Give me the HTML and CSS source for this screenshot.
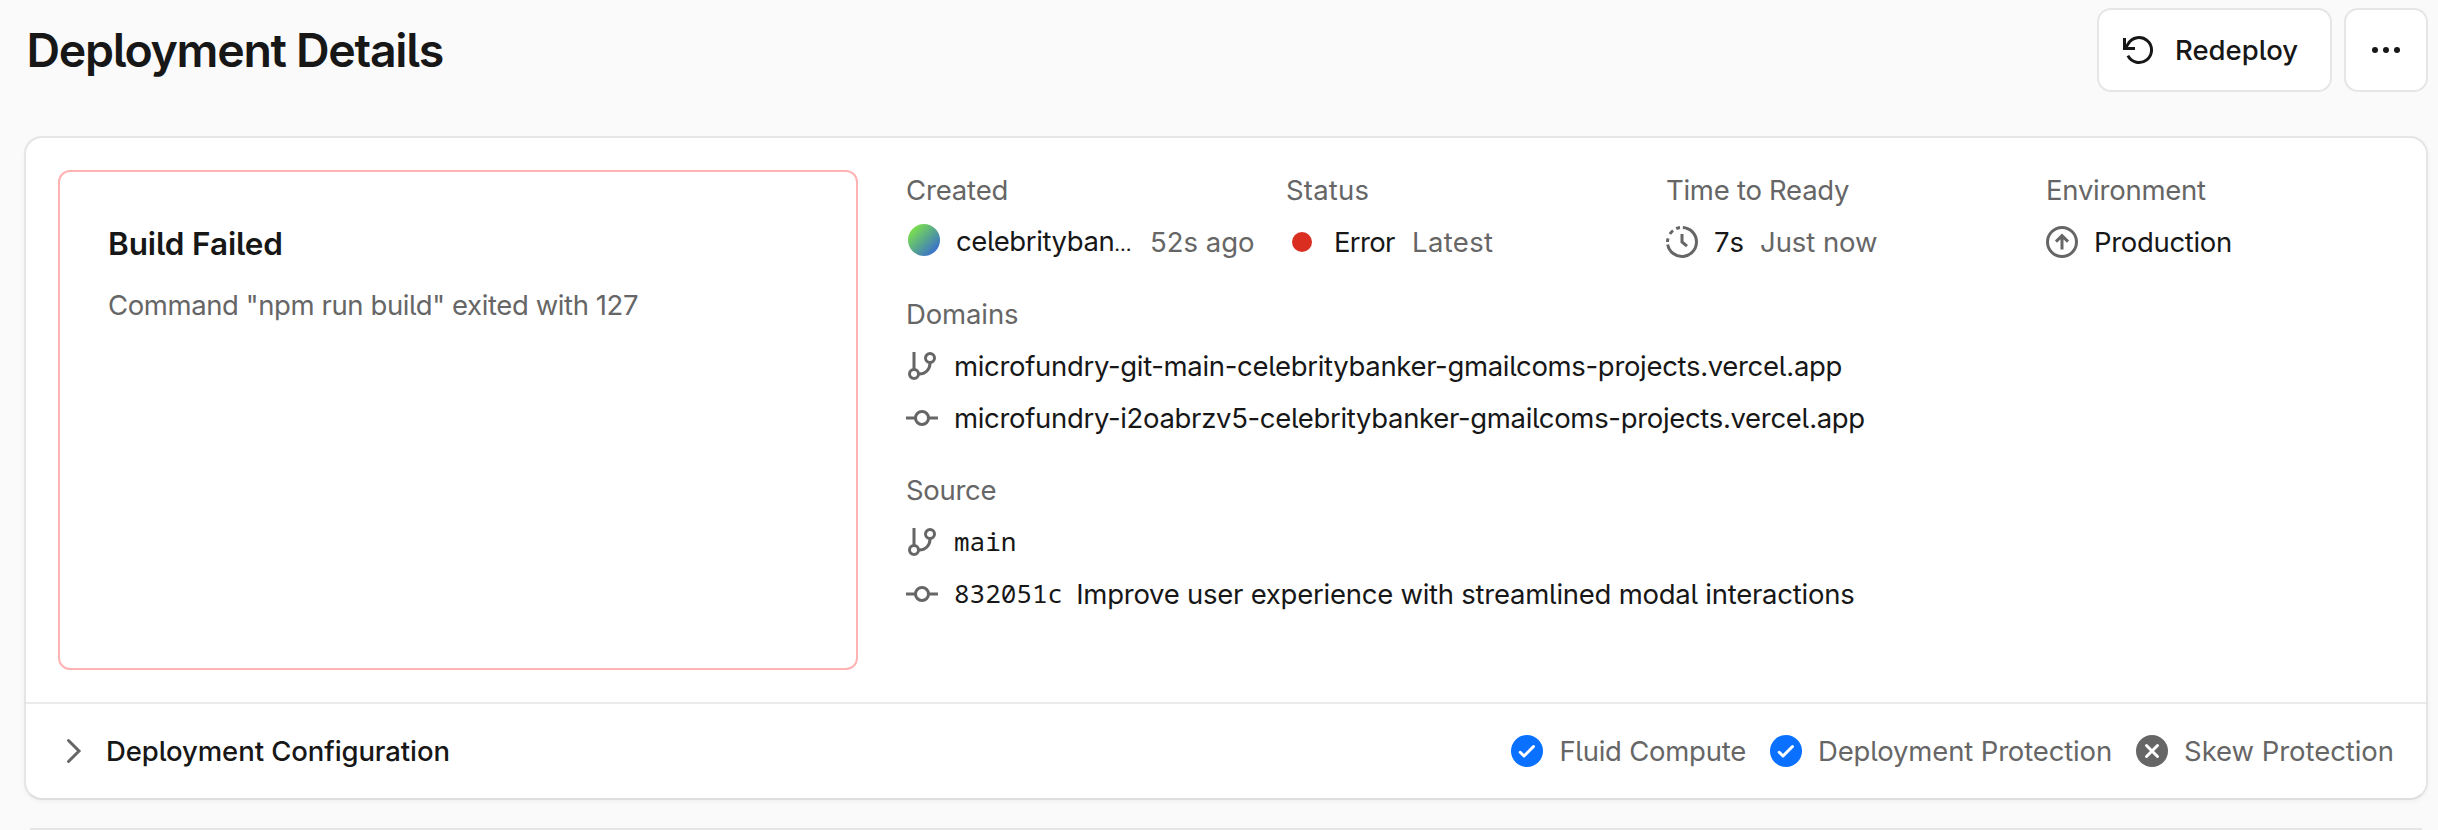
FILE: index.html
```html
<!DOCTYPE html>
<html lang="en">
<head>
<meta charset="utf-8">
<title>Deployment Details</title>
<link rel="stylesheet" href="styles.css">
</head>
<body>
<svg class="sprite" aria-hidden="true">
  <symbol id="branch" viewBox="0 0 32 32"><path d="M8 2v17.5M13 24c6.5 0 11-4.5 11-11"/><circle cx="8" cy="24" r="4.5"/><circle cx="24" cy="8" r="4.5"/></symbol>
  <symbol id="commit" viewBox="0 0 32 32"><path d="M0 16h9.5M22.5 16H32"/><circle cx="16" cy="16" r="6.5"/></symbol>
  <symbol id="check" viewBox="0 0 32 32"><circle class="disc" cx="16" cy="16" r="16"/><path d="M9.2 17.3l3.8 3.7 9.5-9.5"/></symbol>
</svg>
<header class="header">
  <h1 class="title">Deployment Details</h1>
  <div class="actions">
    <button class="button redeploy">
      <svg class="icon" viewBox="0 0 32 32"><path d="M5.9 21.6A12.5 12.5 0 1 0 6.2 9.8L3.5 14"/><path d="M2.5 4v10.5H13"/></svg>
      <span class="t-redeploy">Redeploy</span>
    </button>
    <button class="button more" aria-label="More">
      <svg class="icon dots" viewBox="0 0 32 32"><circle cx="5" cy="16" r="3"/><circle cx="16" cy="16" r="3"/><circle cx="27" cy="16" r="3"/></svg>
    </button>
  </div>
</header>
<main class="card">
  <div class="overview">
    <section class="failure">
      <h2 class="failure-title">Build Failed</h2>
      <p class="failure-text">Command "npm run build" exited with 127</p>
    </section>
    <div class="details">
      <div class="stats">
        <div class="group">
          <div class="label t-created">Created</div>
          <div class="row"><span class="avatar"></span><span class="t-user">celebrityban<span class="ellipsis">…</span></span><span class="muted t-age">52s ago</span></div>
        </div>
        <div class="group">
          <div class="label t-status">Status</div>
          <div class="row"><span class="dot"></span><span class="t-error">Error</span><span class="muted t-latest">Latest</span></div>
        </div>
        <div class="group">
          <div class="label t-time">Time to Ready</div>
          <div class="row">
            <svg class="icon gray" viewBox="0 0 32 32"><path d="M16.8 1.5A14.5 14.5 0 1 1 1.7 18.5M1.5 16Q1.5 14 2 12.3M3.9 8Q5.2 6 7.1 4.6M10.2 2.7Q12 1.9 14 1.6M16 8v8l5 4.2"/></svg>
            <span class="t-seconds">7s</span><span class="muted t-now">Just now</span>
          </div>
        </div>
        <div class="group">
          <div class="label t-env">Environment</div>
          <div class="row">
            <svg class="icon gray" viewBox="0 0 32 32"><circle cx="16" cy="16" r="14.5"/><path d="M16 23.5V10M10 15.6l6-6 6 6"/></svg>
            <span class="t-prod">Production</span>
          </div>
        </div>
      </div>
      <div class="group">
        <div class="label t-domains">Domains</div>
        <div class="row"><svg class="icon gray"><use href="#branch"/></svg><span class="t-domain">microfundry-git-main-celebritybanker-gmailcoms-projects.vercel.app</span></div>
        <div class="row"><svg class="icon gray"><use href="#commit"/></svg><span class="t-domain">microfundry-i2oabrzv5-celebritybanker-gmailcoms-projects.vercel.app</span></div>
      </div>
      <div class="group">
        <div class="label t-source">Source</div>
        <div class="row"><svg class="icon gray"><use href="#branch"/></svg><span class="mono">main</span></div>
        <div class="row"><svg class="icon gray"><use href="#commit"/></svg><span class="mono">832051c</span><span class="t-message">Improve user experience with streamlined modal interactions</span></div>
      </div>
    </div>
  </div>
  <footer class="config">
    <svg class="icon gray chevron" viewBox="0 0 32 32"><path d="M10.5 5.5L21 16 10.5 26.5"/></svg>
    <span class="t-config">Deployment Configuration</span>
    <div class="features">
      <span class="feature"><svg class="icon badge"><use href="#check"/></svg><span class="t-fluid">Fluid Compute</span></span>
      <span class="feature"><svg class="icon badge"><use href="#check"/></svg><span class="t-protect">Deployment Protection</span></span>
      <span class="feature"><svg class="icon badge off" viewBox="0 0 32 32"><circle class="disc" cx="16" cy="16" r="16"/><path d="M10.5 10.5l11 11M21.5 10.5l-11 11"/></svg><span class="t-skew">Skew Protection</span></span>
    </div>
  </footer>
</main>
<div class="next"></div>
</body>
</html>
```
FILE: styles.css
```css
* { box-sizing: border-box; }
body {
  margin: 0;
  padding: 8px 10px 0 24px;
  background: #fafafa;
  color: #171717;
  font: 400 27.5px/40px Inter, sans-serif;
  font-feature-settings: "cv05";
}
h1, h2, p { margin: 0; }
.sprite { display: none; }
.icon { width: 32px; height: 32px; flex: none; fill: none; stroke: currentColor; stroke-width: 3; }
.gray, .muted, .label { color: #666; }

.header { display: flex; align-items: center; justify-content: space-between; height: 84px; }
.title { padding-left: 2.5px; font-size: 46.5px; font-weight: 600; line-height: 56px; letter-spacing: -1.3px; }
.actions { display: flex; gap: 12px; }
.button {
  display: flex; align-items: center; height: 84px; padding: 0;
  border: 2px solid #e6e6e6; border-radius: 14px; background: #fff; color: inherit;
  font: inherit; font-weight: 500; font-feature-settings: inherit;
}
.redeploy { width: 235px; gap: 21px; padding-left: 23px; }
.more { width: 84px; justify-content: center; }
.dots { fill: currentColor; stroke: none; }

.card {
  margin-top: 44px; height: 664px;
  border: 2px solid #e5e5e5; border-bottom-color: #dedede; border-radius: 18px;
  background: #fff; box-shadow: 0 2px 4px rgba(0, 0, 0, .04);
}
/* Top edge of the following card */
.next { height: 2px; margin: 28px 6px 0; background: #e5e5e5; }
.overview { display: flex; gap: 48px; height: 566px; padding: 32px; border-bottom: 2px solid #ebebeb; }
.failure { flex: none; width: 800px; height: 500px; padding: 48px 48px; border: 2px solid #ffb3b3; border-radius: 12px; }
.failure-title { font-size: 31.5px; font-weight: 600; line-height: 48px; letter-spacing: -.1px; }
.failure-text { margin-top: 17px; color: #666; letter-spacing: -.4px; }

.details { display: flex; flex: 1; flex-direction: column; gap: 32px; min-width: 0; }
.stats { display: grid; grid-template-columns: repeat(4, 380px); }
.group { display: flex; flex-direction: column; gap: 12px; white-space: nowrap; }
.row { display: flex; align-items: center; gap: 16px; height: 40px; }
.avatar { width: 32px; height: 32px; margin: -4px 0 0 2px; border-radius: 50%; background: linear-gradient(135deg, #84ee3c 5%, #2f62dc 95%); }
.dot { width: 20px; height: 20px; margin: 0 6px; border-radius: 50%; background: #da2f20; }
.mono { margin-top: -2px; font: 26px/40px "Noto Sans Mono", "DejaVu Sans Mono", monospace; }

.config { display: flex; align-items: center; gap: 16px; height: 94px; padding: 0 32px; }
.chevron { stroke-linecap: round; }
.features { display: flex; gap: 24px; margin-left: auto; color: #666; }
.feature { display: flex; align-items: center; gap: 16px; }
.badge { stroke: #fff; stroke-linecap: round; stroke-linejoin: round; }
.disc { fill: #0a70ff; stroke: none; }
.off .disc { fill: #666; }

/* Letter fitting per string */
.t-created { letter-spacing: -.165px; }
.t-status { letter-spacing: .205px; }
.t-user { width: 178px; letter-spacing: -.4px; }
.ellipsis { font-size: 20px; }
.t-error { width: 62px; letter-spacing: -.674px; }
.t-latest { letter-spacing: .347px; }
.t-time { letter-spacing: -.269px; }
.t-seconds { width: 30px; letter-spacing: 1px; }
.t-now { letter-spacing: -.063px; }
.t-env { letter-spacing: -.249px; }
.t-prod { letter-spacing: -.323px; }
.t-domains { letter-spacing: -.129px; }
.t-domain { letter-spacing: -.325px; }
.t-source { letter-spacing: -.3px; }
.t-message { margin-left: -3px; letter-spacing: -.25px; }
.t-config { font-weight: 500; letter-spacing: -.09px; }
.t-fluid { letter-spacing: -.25px; }
.t-protect { letter-spacing: -.15px; }
.t-skew { letter-spacing: -.05px; }
```
